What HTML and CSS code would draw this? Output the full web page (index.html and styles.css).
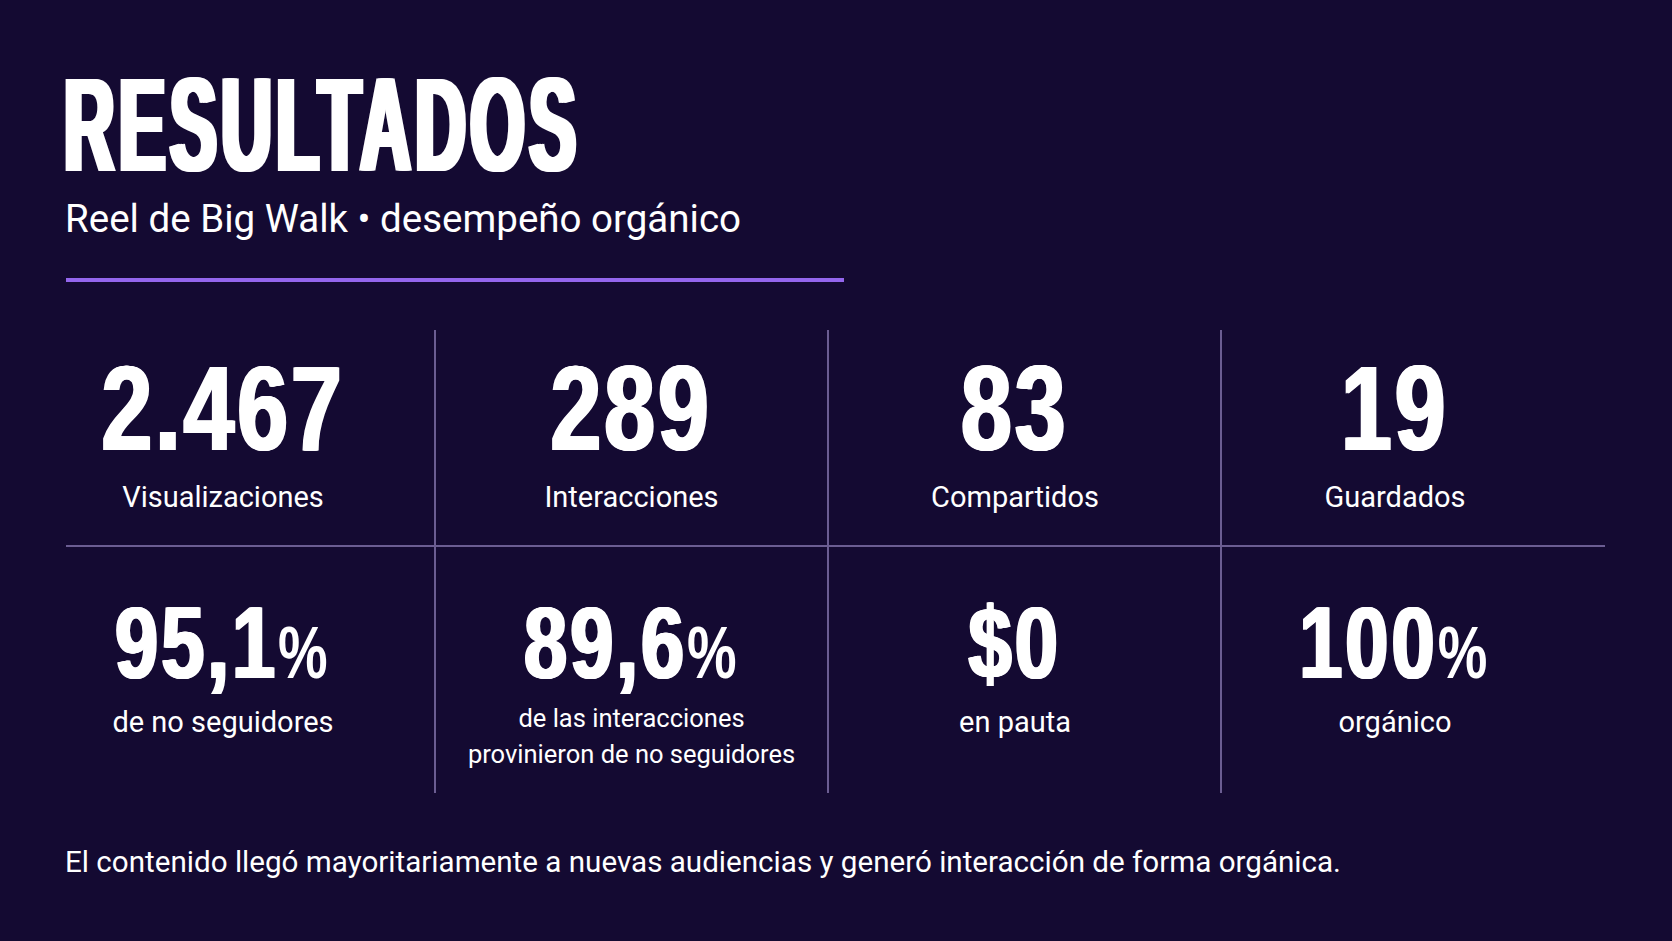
FILE: index.html
```html
<!DOCTYPE html>
<html lang="es">
<head>
<meta charset="utf-8">
<title>Resultados</title>
<link rel="stylesheet" href="styles.css">
</head>
<body>
<main class="slide">
  <h1 class="title"><span class="title-text">RESULTADOS</span></h1>
  <p class="subtitle">Reel de Big Walk • desempeño orgánico</p>
  <div class="divider"></div>
  <section class="stats">
    <div class="stat top c1"><span class="num">2.467</span><span class="label">Visualizaciones</span></div>
    <div class="stat top c2"><span class="num">289</span><span class="label">Interacciones</span></div>
    <div class="stat top c3"><span class="num">83</span><span class="label">Compartidos</span></div>
    <div class="stat top c4"><span class="num">19</span><span class="label">Guardados</span></div>
    <div class="stat bottom c1"><span class="num sm">95,1<span class="pct">%</span></span><span class="label">de no seguidores</span></div>
    <div class="stat bottom c2"><span class="num sm">89,6<span class="pct">%</span></span><span class="label two">de las interacciones<br>provinieron de no seguidores</span></div>
    <div class="stat bottom c3"><span class="num sm">$0</span><span class="label">en pauta</span></div>
    <div class="stat bottom c4"><span class="num sm">100<span class="pct">%</span></span><span class="label">orgánico</span></div>
  </section>
  <p class="note">El contenido llegó mayoritariamente a nuevas audiencias y generó interacción de forma orgánica.</p>
</main>
</body>
</html>
```
FILE: styles.css
```css
html, body {
  margin: 0;
  padding: 0;
  background: #140a32;
}

body {
  font-family: Roboto, "Liberation Sans", Arial, sans-serif;
  color: #ffffff;
}

.slide {
  width: 1672px;
  height: 941px;
  box-sizing: border-box;
  padding: 58px 0 0 66px;
  overflow: hidden;
  background: #140a32;
}

.title {
  margin: 0 0 0 -2px;
  height: 134px;
  font: 700 134px/134px "Liberation Sans", Arial, sans-serif;
  white-space: nowrap;
}

.title-text {
  display: inline-block;
  letter-spacing: 9px;
  transform: scaleX(0.52);
  transform-origin: left center;
  text-shadow: 3px 0 #fff, -3px 0 #fff, 6px 0 #fff, -6px 0 #fff;
}

.subtitle {
  margin: 4px 0 0 -1px;
  font-size: 38.5px;
  line-height: 46px;
  font-weight: 400;
}

.divider {
  margin-top: 36px;
  width: 778px;
  height: 4px;
  background: #9466ee;
}

.stats {
  --line: #6b5d92;
  margin-top: 48px;
  width: 1539px;
  display: grid;
  grid-template-columns: 368px 393px 393px 385px;
}

.stat {
  display: flex;
  flex-direction: column;
  align-items: center;
  box-sizing: border-box;
  text-align: center;
}

.top {
  height: 217px;
  padding-top: 18px;
  border-bottom: 2px solid var(--line);
}

.bottom {
  height: 246px;
  padding-top: 45px;
}

.c2, .c3, .c4 {
  border-left: 2px solid var(--line);
}

.c1 { padding-right: 54px; }
.c3 { padding-right: 19px; }
.c4 { padding-right: 37px; }

.num {
  display: inline-block;
  font: 700 120px/120px "Liberation Sans", Arial, sans-serif;
  letter-spacing: 4px;
  white-space: nowrap;
  transform: scaleX(0.76);
  text-shadow: 2px 0 #fff, -2px 0 #fff, 1px 0 #fff, -1px 0 #fff;
}

.num.sm {
  font-size: 102px;
  line-height: 102px;
}

.pct {
  font-size: 0.72em;
  line-height: 1;
  text-shadow: none;
}

.label {
  margin-top: 12px;
  font-size: 29px;
  line-height: 35px;
  white-space: nowrap;
}

.bottom .label {
  margin-top: 11px;
}

.bottom .label.two {
  margin-top: 6px;
  font-size: 25.5px;
  line-height: 36px;
}

.note {
  margin: 52px 0 0 -1px;
  font-size: 29.6px;
  line-height: 35px;
}
```
